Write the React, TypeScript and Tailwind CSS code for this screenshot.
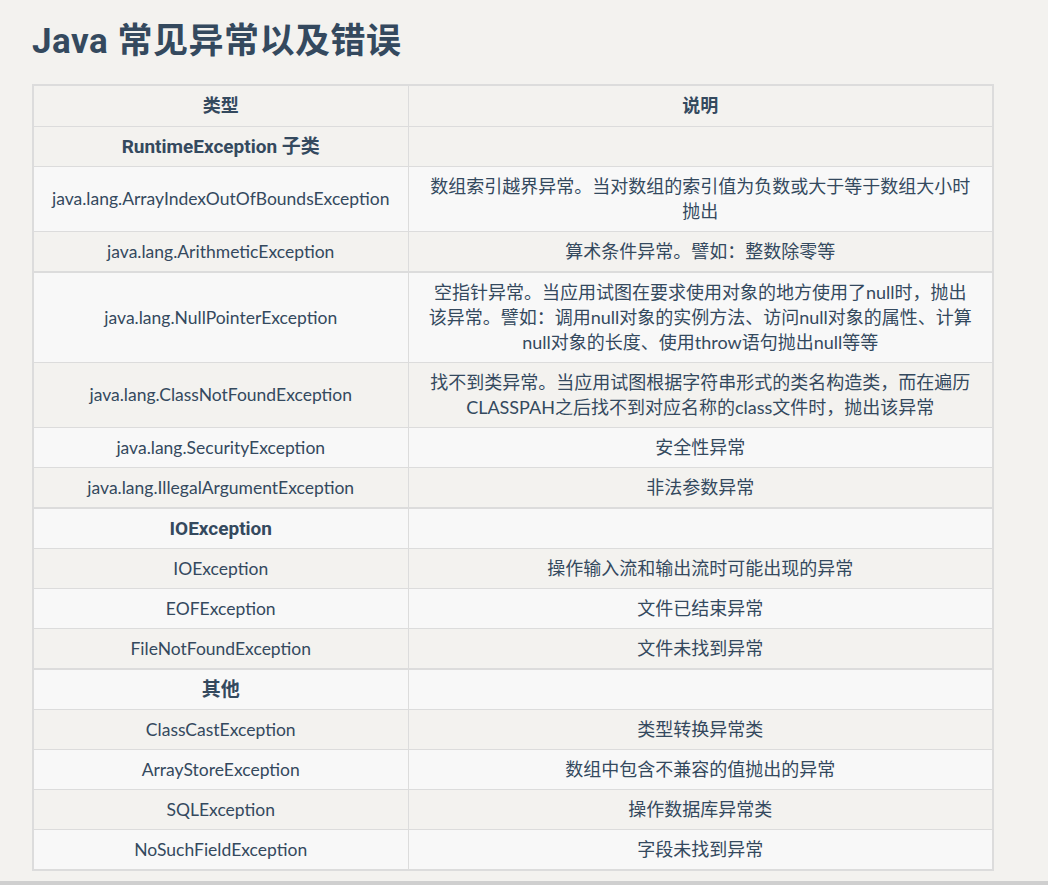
const rows: [string, string, string][] = [
  ["h", "RuntimeException 子类", ""],
  ["", "java.lang.ArrayIndexOutOfBoundsException", "数组索引越界异常。当对数组的索引值为负数或大于等于数组大小时抛出"],
  ["", "java.lang.ArithmeticException", "算术条件异常。譬如：整数除零等"],
  ["", "java.lang.NullPointerException", "空指针异常。当应用试图在要求使用对象的地方使用了null时，抛出该异常。譬如：调用null对象的实例方法、访问null对象的属性、计算null对象的长度、使用throw语句抛出null等等"],
  ["", "java.lang.ClassNotFoundException", "找不到类异常。当应用试图根据字符串形式的类名构造类，而在遍历CLASSPAH之后找不到对应名称的class文件时，抛出该异常"],
  ["", "java.lang.SecurityException", "安全性异常"],
  ["", "java.lang.IllegalArgumentException", "非法参数异常"],
  ["h", "IOException", ""],
  ["", "IOException", "操作输入流和输出流时可能出现的异常"],
  ["", "EOFException", "文件已结束异常"],
  ["", "FileNotFoundException", "文件未找到异常"],
  ["h", "其他", ""],
  ["", "ClassCastException", "类型转换异常类"],
  ["", "ArrayStoreException", "数组中包含不兼容的值抛出的异常"],
  ["", "SQLException", "操作数据库异常类"],
  ["", "NoSuchFieldException", "字段未找到异常"],
];
const thick = new Set([2, 6, 10]);
const bold = { fontFamily: 'Roboto, "Noto Sans CJK SC", sans-serif' };

export default function App() {
  return (
    <div className="w-[1048px] h-[885px] overflow-hidden bg-[#f3f2ef] text-[#34495e] relative" style={{ fontFamily: 'Lato, "Noto Sans CJK SC", sans-serif' }}>
      <h1 className="pl-[32px] pt-[16px] h-[84px] text-[35px] font-bold tracking-[0.5px]" style={bold}>Java 常见异常以及错误</h1>
      <table className="ml-[32px] w-[962px] border-collapse border-2 border-[#dcdcdc] text-[18px] leading-[25px]">
        <thead>
          <tr className="bg-[#f3f2ef]">
            <th className="w-[375px] h-[41px] p-0 border border-[#dcdcdc] font-bold text-[18px]" style={bold}>类型</th>
            <th className="h-[41px] p-0 border border-[#dcdcdc] font-bold text-[18px]" style={bold}>说明</th>
          </tr>
        </thead>
        <tbody>
          {rows.map(([k, a, b], i) => (
            <tr key={i} className={`${i % 2 === 0 ? "bg-[#f3f2ef]" : "bg-[#f8f8f8]"} ${thick.has(i) ? "border-b-2" : "border-b"} border-[#dcdcdc]`}>
              <td className={`border-x border-[#dcdcdc] text-center px-[12px] py-[7px] ${k ? "font-bold text-[19px]" : "text-[17.5px]"}`} style={k ? bold : undefined}>{a}</td>
              <td className="border-x border-[#dcdcdc] text-center px-[20px] py-[7px]">{b}</td>
            </tr>
          ))}
        </tbody>
      </table>
      <div className="absolute left-0 bottom-0 w-full h-[4px] bg-[#cfcfcf]" />
    </div>
  );
}
